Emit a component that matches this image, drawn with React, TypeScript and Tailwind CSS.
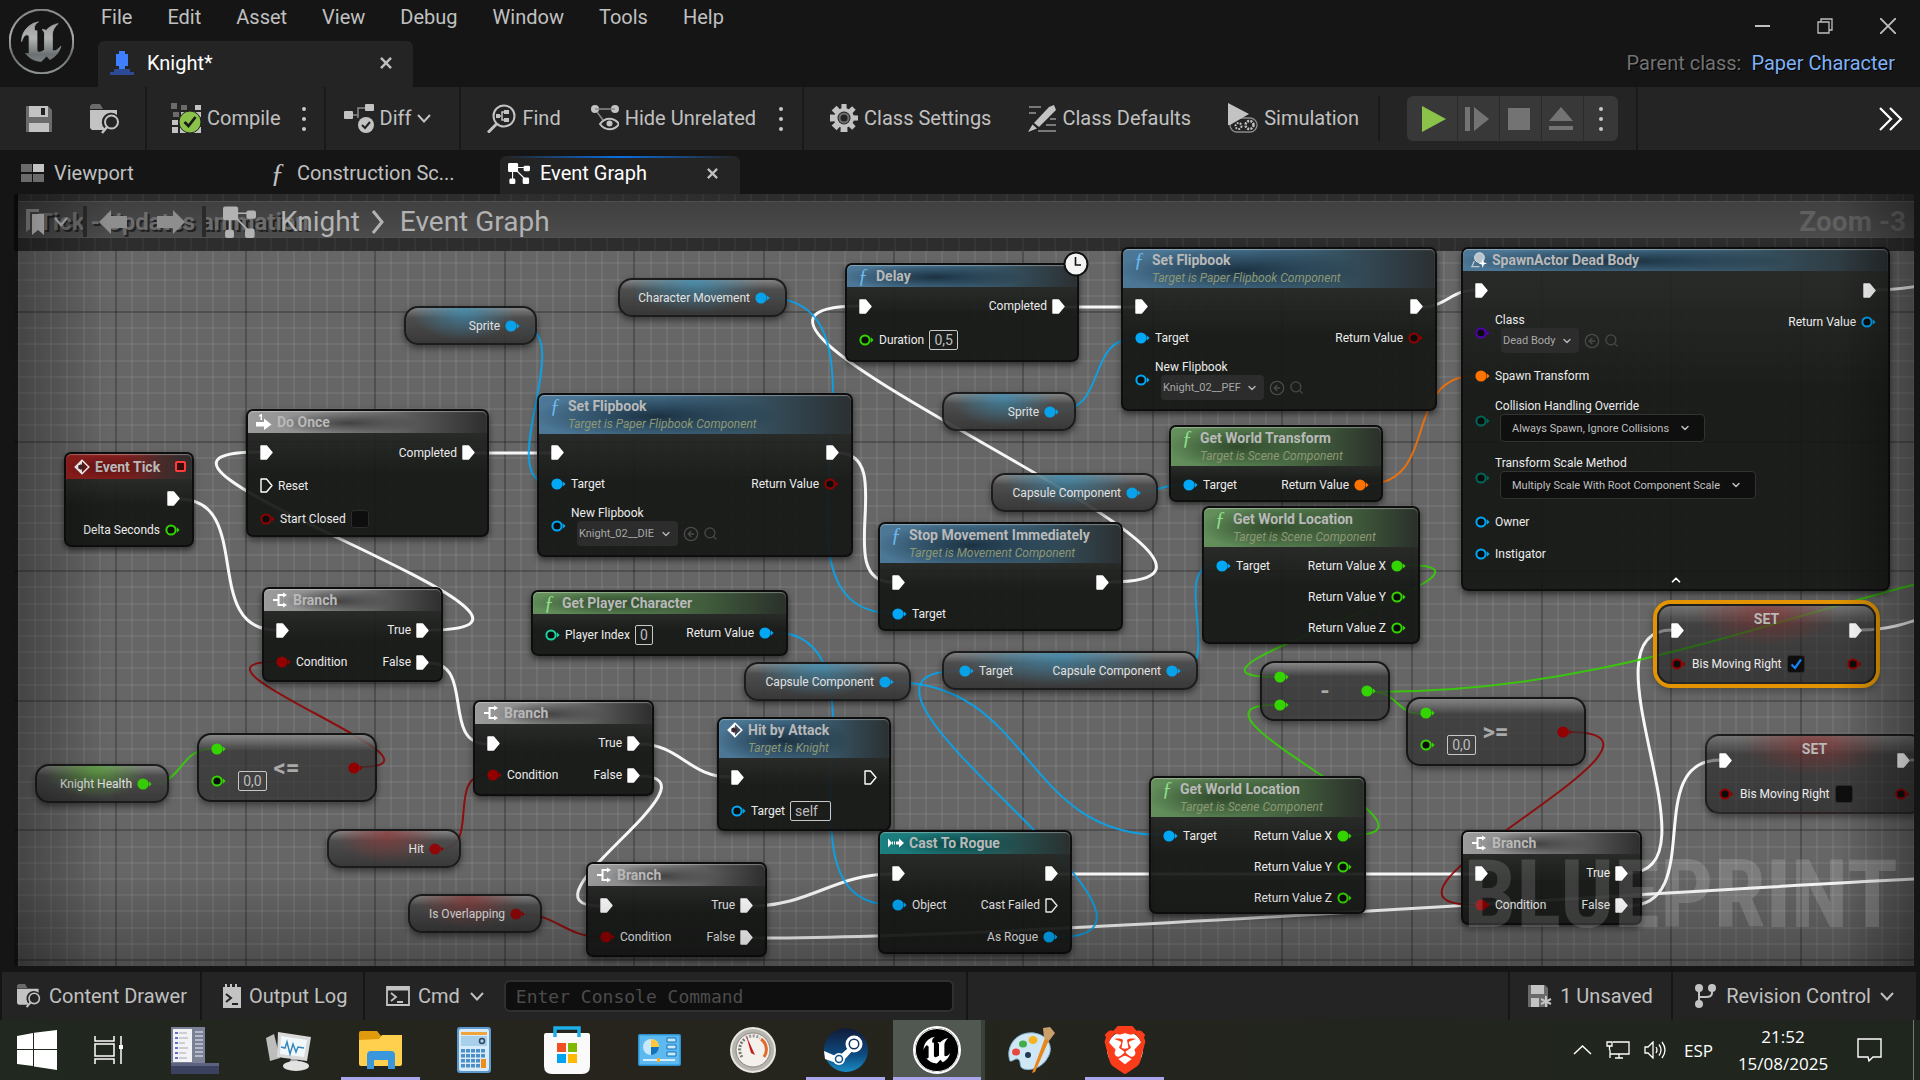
import React from "react";
import { ChevronDown, ChevronUp, Search, CircleArrowLeft } from "lucide-react";
import { SiBrave, SiUnrealengine } from "react-icons/si";

/* ------------------------------------------------------------------ */
/* Graph model                                                          */
/* ------------------------------------------------------------------ */

const BLUE = "#00a8f6";
const GREEN = "#34d400";
const RED = "#930000";
const ORANGE = "#ff7300";
const PURPLE = "#5200b4";
const TEAL = "#00665a";
const MINT = "#1fd3a0";
const WHITE = "#ffffff";

type Pin = {
  exec?: boolean;
  color?: string;
  linked?: boolean;
  label?: string;
  box?: string;
  wide?: boolean;
  check?: boolean;
  picker?: string;
  combo?: string;
};

type HeaderTone = "blue" | "green" | "gray" | "red" | "teal";
type IconName = "fn" | "branch" | "event" | "once" | "cast" | "spawn";

type GraphNode = {
  x: number;
  y: number;
  w: number;
  h: number;
  title: string;
  sub?: string;
  tone: HeaderTone;
  icon: IconName;
  row?: "tight" | "normal" | "loose";
  left: Pin[];
  right: Pin[];
  clock?: boolean;
  badge?: boolean;
  caret?: boolean;
};

const execIn: Pin = { exec: true, linked: true };
const on = (label: string, color: string): Pin => ({ label, color, linked: true });
const off = (label: string, color: string): Pin => ({ label, color });
const execs = (label: string): Pin => ({ exec: true, linked: true, label });

const nodes: GraphNode[] = [
  { x: 64, y: 452, w: 130, h: 95, title: "Event Tick", tone: "red", icon: "event", badge: true, left: [], right: [execIn, off("Delta Seconds", GREEN)] },
  { x: 246, y: 409, w: 243, h: 128, title: "Do Once", tone: "gray", icon: "once", row: "loose", left: [execIn, { exec: true, label: "Reset" }, { color: RED, label: "Start Closed", check: false }], right: [execs("Completed")] },
  { x: 537, y: 393, w: 316, h: 164, title: "Set Flipbook", sub: "Target is Paper Flipbook Component", tone: "blue", icon: "fn", row: "tight", left: [execIn, on("Target", BLUE), { color: BLUE, label: "New Flipbook", picker: "Knight_02__DIE" }], right: [execIn, off("Return Value", RED)] },
  { x: 845, y: 263, w: 234, h: 99, title: "Delay", tone: "blue", icon: "fn", clock: true, left: [execIn, { color: GREEN, label: "Duration", box: "0,5" }], right: [execs("Completed")] },
  { x: 1121, y: 247, w: 316, h: 164, title: "Set Flipbook", sub: "Target is Paper Flipbook Component", tone: "blue", icon: "fn", row: "tight", left: [execIn, on("Target", BLUE), { color: BLUE, label: "New Flipbook", picker: "Knight_02__PEF" }], right: [execIn, off("Return Value", RED)] },
  { x: 1461, y: 247, w: 429, h: 344, title: "SpawnActor Dead Body", tone: "blue", icon: "spawn", caret: true, left: [execIn, { color: PURPLE, label: "Class", picker: "Dead Body" }, on("Spawn Transform", ORANGE), { color: TEAL, label: "Collision Handling Override", combo: "Always Spawn, Ignore Collisions" }, { color: TEAL, label: "Transform Scale Method", combo: "Multiply Scale With Root Component Scale" }, off("Owner", BLUE), off("Instigator", BLUE)], right: [execIn, off("Return Value", BLUE)] },
  { x: 878, y: 522, w: 245, h: 109, title: "Stop Movement Immediately", sub: "Target is Movement Component", tone: "blue", icon: "fn", left: [execIn, on("Target", BLUE)], right: [execIn] },
  { x: 1169, y: 425, w: 214, h: 77, title: "Get World Transform", sub: "Target is Scene Component", tone: "green", icon: "fn", row: "tight", left: [on("Target", BLUE)], right: [on("Return Value", ORANGE)] },
  { x: 1202, y: 506, w: 218, h: 138, title: "Get World Location", sub: "Target is Scene Component", tone: "green", icon: "fn", row: "tight", left: [on("Target", BLUE)], right: [on("Return Value X", GREEN), off("Return Value Y", GREEN), off("Return Value Z", GREEN)] },
  { x: 531, y: 590, w: 257, h: 66, title: "Get Player Character", tone: "green", icon: "fn", row: "tight", left: [{ color: MINT, label: "Player Index", box: "0" }], right: [on("Return Value", BLUE)] },
  { x: 262, y: 587, w: 181, h: 95, title: "Branch", tone: "gray", icon: "branch", left: [execIn, on("Condition", RED)], right: [execs("True"), execs("False")] },
  { x: 473, y: 700, w: 181, h: 96, title: "Branch", tone: "gray", icon: "branch", left: [execIn, on("Condition", RED)], right: [execs("True"), execs("False")] },
  { x: 586, y: 862, w: 181, h: 95, title: "Branch", tone: "gray", icon: "branch", left: [execIn, on("Condition", RED)], right: [execs("True"), execs("False")] },
  { x: 1461, y: 830, w: 181, h: 95, title: "Branch", tone: "gray", icon: "branch", left: [execIn, on("Condition", RED)], right: [execs("True"), execs("False")] },
  { x: 717, y: 717, w: 174, h: 114, title: "Hit by Attack", sub: "Target is Knight", tone: "blue", icon: "event", left: [execIn, { color: BLUE, label: "Target", box: "self", wide: true }], right: [{ exec: true }] },
  { x: 878, y: 830, w: 194, h: 124, title: "Cast To Rogue", tone: "teal", icon: "cast", left: [execIn, on("Object", BLUE)], right: [execIn, { exec: true, label: "Cast Failed" }, on("As Rogue", BLUE)] },
  { x: 1149, y: 776, w: 217, h: 138, title: "Get World Location", sub: "Target is Scene Component", tone: "green", icon: "fn", row: "tight", left: [on("Target", BLUE)], right: [on("Return Value X", GREEN), off("Return Value Y", GREEN), off("Return Value Z", GREEN)] },
];

type Tint = "blue" | "green" | "red" | "none";
const variables: { x: number; y: number; w: number; label: string; target?: string; color: string; tint: Tint }[] = [
  { x: 404, y: 306, w: 133, label: "Sprite", color: BLUE, tint: "blue" },
  { x: 618, y: 278, w: 169, label: "Character Movement", color: BLUE, tint: "blue" },
  { x: 942, y: 392, w: 134, label: "Sprite", color: BLUE, tint: "blue" },
  { x: 991, y: 473, w: 167, label: "Capsule Component", color: BLUE, tint: "blue" },
  { x: 744, y: 662, w: 167, label: "Capsule Component", color: BLUE, tint: "blue" },
  { x: 942, y: 651, w: 256, label: "Capsule Component", target: "Target", color: BLUE, tint: "blue" },
  { x: 35, y: 764, w: 134, label: "Knight Health", color: GREEN, tint: "green" },
  { x: 327, y: 829, w: 134, label: "Hit", color: RED, tint: "red" },
  { x: 408, y: 894, w: 134, label: "Is Overlapping", color: RED, tint: "red" },
];

const operators = [
  { x: 197, y: 733, w: 180, h: 69, sign: "<=", box: true, out: RED },
  { x: 1260, y: 661, w: 130, h: 60, sign: "-", box: false, out: GREEN },
  { x: 1406, y: 697, w: 180, h: 69, sign: ">=", box: true, out: RED },
];

type Wire = [number, number, number, number, string];
const wires: Wire[] = [
  [179, 499, 276, 630, WHITE],
  [429, 630, 260, 452, WHITE],
  [429, 663, 487, 744, WHITE],
  [475, 453, 552, 453, WHITE],
  [838, 453, 892, 582, WHITE],
  [1109, 582, 860, 306, WHITE],
  [1064, 307, 1136, 307, WHITE],
  [1422, 307, 1475, 290, WHITE],
  [1875, 290, 1990, 278, WHITE],
  [639, 744, 730, 777, WHITE],
  [639, 776, 600, 906, WHITE],
  [752, 906, 892, 874, WHITE],
  [752, 938, 2252, 868, WHITE],
  [1058, 874, 1476, 874, WHITE],
  [1628, 873, 1672, 630, WHITE],
  [1628, 906, 1720, 760, WHITE],
  [1861, 630, 1990, 604, WHITE],
  [1910, 760, 1990, 760, WHITE],
  [519, 326, 552, 484, BLUE],
  [768, 298, 892, 613, BLUE],
  [1057, 411, 1136, 338, BLUE],
  [1140, 492, 1183, 484, BLUE],
  [1178, 671, 1216, 565, BLUE],
  [772, 632, 892, 905, BLUE],
  [892, 682, 1162, 835, BLUE],
  [1058, 937, 958, 671, BLUE],
  [360, 767, 274, 662, RED],
  [441, 849, 486, 775, RED],
  [522, 914, 600, 937, RED],
  [1569, 732, 1476, 905, RED],
  [1368, 484, 1474, 376, ORANGE],
  [151, 784, 211, 749, GREEN],
  [1405, 565, 1275, 677, GREEN],
  [1352, 835, 1275, 705, GREEN],
  [1373, 692, 1421, 714, GREEN],
  [1373, 692, 2223, 542, GREEN],
];

/* Links leaving to the right get a soft spline, links that turn back a wide loop. */
function spline([x1, y1, x2, y2]: Wire) {
  const dx = Math.abs(x2 - x1);
  const dy = Math.abs(y2 - y1);
  const c =
    x2 >= x1
      ? (Math.min(dx, 1000) + Math.min(dy, 1000)) / 3
      : (2 * Math.min(dx, 200) + 1.5 * Math.min(dy, 200)) / 3;
  return `M${x1} ${y1}C${x1 + c} ${y1} ${x2 - c} ${y2} ${x2} ${y2}`;
}

/* ------------------------------------------------------------------ */
/* Pins and fields                                                      */
/* ------------------------------------------------------------------ */

function ExecPin({ linked }: { linked?: boolean }) {
  return (
    <svg width="13" height="15" viewBox="0 0 13 15" className="shrink-0">
      <path d="M1 1h5.5L12 7.5 6.500 14H1z" fill={linked ? "#fff" : "none"} stroke="#fff" strokeWidth="1.4" strokeLinejoin="round" />
    </svg>
  );
}

function DataPin({ color, linked }: { color: string; linked?: boolean }) {
  return (
    <svg width="15" height="12" viewBox="0 0 15 12" className="shrink-0">
      <circle cx="6" cy="6" r="4.600" fill={linked ? color : "#0b0d0c"} stroke={color} strokeWidth="2" />
      <path d="M11.800 3.200 14.600 6l-2.800 2.800z" fill={color} />
    </svg>
  );
}

const PinGlyph = ({ pin }: { pin: Pin }) =>
  pin.exec ? <ExecPin linked={pin.linked} /> : <DataPin color={pin.color ?? WHITE} linked={pin.linked} />;

function Tick({ checked, label }: { checked: boolean; label: string }) {
  return (
    <span className="relative flex size-[18px] shrink-0">
      <input type="checkbox" defaultChecked={checked} aria-label={label} className="peer size-[18px] appearance-none rounded-[3px] border border-[#2c2c2c] bg-[#0e0e0e]" />
      <svg viewBox="0 0 18 18" className="pointer-events-none absolute inset-0 hidden peer-checked:block">
        <path d="M4.500 9.500 8 13l6-8.500" fill="none" stroke="#1583f0" strokeWidth="2.200" />
      </svg>
    </span>
  );
}

function ValueBox({ value, label, wide }: { value: string; label: string; wide?: boolean }) {
  const width = wide ? "w-[41px] pl-1" : value.length > 1 ? "w-[29px] text-center" : "w-[18px] text-center";
  return (
    <input
      aria-label={label}
      defaultValue={value}
      className={`h-5 ${width} rounded-[2px] border border-[#c8c8c8] bg-transparent text-sm leading-none text-[#bdbdbd]`}
    />
  );
}

function DropDown({ value, label, solid }: { value: string; label: string; solid?: boolean }) {
  return (
    <span className="relative flex items-center">
      <select
        aria-label={label}
        className={
          solid
            ? "h-7 appearance-none rounded-[4px] border border-[#333] bg-[#0f0f0f] pr-[34px] pl-[11px] text-[11px] text-[#c0c0c0]"
            : "h-[25px] appearance-none rounded-[4px] bg-[#2b2c2b] pr-[23px] pl-0.5 text-[11px] text-[#a8a8a8]"
        }
      >
        <option>{value}</option>
      </select>
      <ChevronDown
        size={12}
        strokeWidth={3}
        className={solid ? "pointer-events-none absolute right-[14px] text-[#c0c0c0]" : "pointer-events-none absolute right-[6px] text-[#b0b0b0]"}
      />
    </span>
  );
}

const rowHeight = { tight: "h-[31px]", normal: "h-8", loose: "h-[33px]" };

function LeftPin({ pin, row }: { pin: Pin; row: keyof typeof rowHeight }) {
  if (pin.picker || pin.combo) {
    return (
      <div className="my-[7px] flex items-center gap-[5px]">
        <PinGlyph pin={pin} />
        <div className="flex flex-col">
          <span className="h-[15px] leading-[15px]">{pin.label}</span>
          <div className={pin.picker ? "flex items-center gap-1 pl-1.5 text-[#4a4a4a]" : "flex pl-[5px]"}>
            <DropDown value={(pin.picker ?? pin.combo) as string} label={pin.label as string} solid={!!pin.combo} />
            {pin.picker && <CircleArrowLeft size={16} className="ml-px" />}
            {pin.picker && <Search size={15} />}
          </div>
        </div>
      </div>
    );
  }
  return (
    <div className={`flex items-center gap-[5px] ${pin.box ? "h-[35px]" : rowHeight[row]}`}>
      <PinGlyph pin={pin} />
      {pin.label && <span>{pin.label}</span>}
      {pin.box && <ValueBox value={pin.box} label={pin.label as string} wide={pin.wide} />}
      {pin.check !== undefined && <Tick checked={pin.check} label={pin.label as string} />}
    </div>
  );
}

function RightPin({ pin, row }: { pin: Pin; row: keyof typeof rowHeight }) {
  return (
    <div className={`flex items-center justify-end gap-[5px] ${rowHeight[row]}`}>
      {pin.label && <span>{pin.label}</span>}
      <PinGlyph pin={pin} />
    </div>
  );
}

/* ------------------------------------------------------------------ */
/* Nodes                                                                */
/* ------------------------------------------------------------------ */

const headerTone: Record<HeaderTone, string> = {
  blue: "bg-[radial-gradient(ellipse_40%_60%_at_38%_55%,rgba(20,38,52,0.85),transparent),linear-gradient(90deg,#4c7796_0%,#45708c_40%,#35505f_70%,#2b3032_100%)]",
  green: "bg-[radial-gradient(ellipse_35%_55%_at_32%_50%,rgba(38,60,34,0.8),transparent),linear-gradient(90deg,#64905c_0%,#557c4f_40%,#3f5a3b_70%,#2a302a_100%)]",
  gray: "bg-[radial-gradient(ellipse_30%_55%_at_42%_55%,rgba(50,50,50,0.8),transparent),linear-gradient(90deg,#9c9c9c_0%,#868686_40%,#575757_70%,#2d2e2d_100%)]",
  red: "bg-[radial-gradient(ellipse_35%_55%_at_35%_55%,rgba(80,10,10,0.7),transparent),linear-gradient(90deg,#9b1f1f_0%,#84211f_45%,#4a2a2a_75%,#2c2d2c_100%)]",
  teal: "bg-[radial-gradient(ellipse_35%_55%_at_40%_55%,rgba(8,62,62,0.8),transparent),linear-gradient(90deg,#1b8080_0%,#1d7272_40%,#265050_70%,#2a302f_100%)]",
};

function NodeIcon({ icon, tone }: { icon: IconName; tone: HeaderTone }) {
  switch (icon) {
    case "fn":
      return <span className={`w-4 text-center font-['Liberation_Serif',serif] text-xl leading-4 italic ${tone === "green" ? "text-[#8fe08a]" : "text-[#6db9f0]"}`}>ƒ</span>;
    case "branch":
      return (
        <svg width="16" height="16" viewBox="0 0 16 16" fill="none" stroke="#fff" strokeWidth="2">
          <path d="M1 8h5M12 3H6.500v10H12" />
          <path d="M11 0.500 15 3l-4 2.500zM11 10.500 15 13l-4 2.500z" fill="#fff" stroke="none" />
        </svg>
      );
    case "event":
      return (
        <svg width="16" height="16" viewBox="0 0 16 16">
          <path d="M8 1.200 14.800 8 8 14.800 1.200 8z" fill="#4a1515" fillOpacity=".3" stroke="#fff" strokeWidth="1.500" />
          <path d="M8 1.200V6H4.500V10H8v4.800L1.200 8z" fill="#fff" />
          <path d="M7.500 4.500 4 8l3.500 3.500V9.500H10v-3H7.500z" fill="#40262a" />
        </svg>
      );
    case "once":
      return (
        <svg width="16" height="16" viewBox="0 0 16 16" fill="#fff">
          <path d="M0 8h8V4.500L15.500 10.500 8 16v-3.500H0z" />
          <path d="M3 1.500 5 0h1v6H4.500V2L3 2.800z" />
        </svg>
      );
    case "cast":
      return (
        <svg width="16" height="12" viewBox="0 0 16 12" fill="#fff">
          <path d="M0 1.500 4 6 0 10.500zM4 4.500h1V7.500H4zM6 4.500h1V7.500H6zM8 4.500h3V1.500L16 6l-5 4.500V7.500H8z" />
        </svg>
      );
    case "spawn":
      return (
        <svg width="16" height="16" viewBox="0 0 17 17">
          <circle cx="9" cy="6" r="5.200" fill="#b9c4cc" stroke="#dfe6ea" />
          <path d="M3.500 9.500 1 15.500h8" fill="none" stroke="#b9c4cc" strokeWidth="1.500" />
          <path d="M12.500 7.500 13.600 11 17 12.200 13.600 13.400 12.500 17 11.400 13.400 8 12.200 11.400 11z" fill="#fff" />
        </svg>
      );
  }
}

function BlueprintNode({ node }: { node: GraphNode }) {
  const row = node.row ?? "normal";
  return (
    <section
      className="absolute z-10 flex flex-col rounded-[7px] border-2 border-[#0d0e0d] bg-[#161816]/93 text-xs text-[#ececec] shadow-[0_3px_6px_rgba(0,0,0,0.55)]"
      style={{ left: node.x, top: node.y, width: node.w, height: node.h }}
    >
      <header className={`flex flex-col rounded-t-[5px] px-2 shadow-[inset_0_1px_1px_rgba(255,255,255,0.35)] ${headerTone[node.tone]}`}>
        <div className={node.badge ? "flex h-[25px] items-center gap-[5px]" : "flex h-[22px] items-center gap-[5px]"}>
          <NodeIcon icon={node.icon} tone={node.tone} />
          <h3 className="text-sm leading-none font-bold whitespace-nowrap text-[#b9b9b9]">{node.title}</h3>
          {node.badge && <span className="-mr-0.5 ml-auto size-[11px] rounded-[2px] border-2 border-[#ff3b3b] bg-[#3a0d0d]" />}
        </div>
        {node.sub && <p className="h-[17px] pl-[21px] text-xs leading-[14px] whitespace-nowrap text-[#8d9875] italic">{node.sub}</p>}
      </header>
      <div className="flex flex-1 justify-between rounded-b-[5px] bg-linear-to-b from-white/6 to-transparent to-40% px-3 pt-[3px] leading-none whitespace-nowrap">
        <div className="flex flex-col">{node.left.map((p, i) => <LeftPin key={i} pin={p} row={row} />)}</div>
        <div className="flex flex-col">{node.right.map((p, i) => <RightPin key={i} pin={p} row={row} />)}</div>
      </div>
      {node.caret && <ChevronUp size={14} strokeWidth={3} className="mb-0.5 self-center text-white" />}
      {node.clock && (
        <svg width="26" height="26" viewBox="0 0 26 26" className="absolute -top-[14px] -right-[12px]">
          <circle cx="13" cy="13" r="11.500" fill="#f4f4f4" stroke="#111" strokeWidth="2" />
          <path d="M12.500 6v8H18" fill="none" stroke="#111" strokeWidth="1.600" />
        </svg>
      )}
    </section>
  );
}

const tintClass: Record<Tint, string> = {
  blue: "bg-[radial-gradient(ellipse_40%_85%_at_45%_8%,rgba(55,150,195,0.7),transparent),linear-gradient(180deg,#858585_0%,#4b4b4b_28%,#353535_100%)]",
  green: "bg-[radial-gradient(ellipse_40%_85%_at_45%_8%,rgba(90,180,50,0.7),transparent),linear-gradient(180deg,#858585_0%,#4b4b4b_28%,#353535_100%)]",
  red: "bg-[radial-gradient(ellipse_40%_85%_at_45%_8%,rgba(150,50,50,0.7),transparent),linear-gradient(180deg,#858585_0%,#4b4b4b_28%,#353535_100%)]",
  none: "bg-[linear-gradient(180deg,rgba(140,140,140,0.85)_0%,rgba(50,50,50,0.7)_24%,rgba(46,46,46,0.7)_100%)]",
};

function VariableNode({ v }: { v: (typeof variables)[number] }) {
  return (
    <section
      className={`absolute z-10 flex h-[39px] items-center rounded-[14px] border-2 border-[#161616] px-[15px] text-xs leading-none whitespace-nowrap text-[#ececec] opacity-92 shadow-[0_3px_6px_rgba(0,0,0,0.5)] ${tintClass[v.tint]}`}
      style={{ left: v.x, top: v.y, width: v.w }}
    >
      {v.target && <span className="flex items-center gap-[5px]"><DataPin color={v.color} linked />{v.target}</span>}
      <span className="ml-auto flex items-center gap-[5px]">{v.label}<DataPin color={v.color} linked /></span>
    </section>
  );
}

function OperatorNode({ op }: { op: (typeof operators)[number] }) {
  return (
    <section
      className={`absolute z-10 flex items-center justify-between rounded-[14px] border-2 border-[#161616] px-3 shadow-[0_3px_6px_rgba(0,0,0,0.4)] ${tintClass.none}`}
      style={{ left: op.x, top: op.y, width: op.w, height: op.h }}
    >
      <div className={op.box ? "flex h-full flex-col justify-between pt-2 pb-[13px]" : "flex h-full flex-col justify-between py-2"}>
        <DataPin color={GREEN} linked />
        <span className="flex h-3 items-center gap-3">
          <DataPin color={GREEN} linked={!op.box} />
          {op.box && <ValueBox value="0,0" label="Second operand" />}
        </span>
      </div>
      <strong className={op.box ? "-ml-[42px] text-2xl text-[#a9a9a9]" : "text-2xl text-[#a9a9a9]"}>{op.sign}</strong>
      <DataPin color={op.out} linked />
    </section>
  );
}

function SetNode({ x, y, checked, selected }: { x: number; y: number; checked: boolean; selected?: boolean }) {
  return (
    <section
      className={`absolute z-10 flex h-[80px] w-[219px] flex-col rounded-[14px] border-2 border-[#161616]/80 bg-[radial-gradient(ellipse_34%_45%_at_50%_8%,rgba(150,40,40,0.55),transparent),linear-gradient(180deg,rgba(120,120,120,0.7)_0%,rgba(30,30,30,0.52)_24%,rgba(20,20,20,0.55)_100%)] px-3 text-xs leading-none text-[#ececec] ${selected ? "shadow-[0_0_0_4px_#e39400,0_3px_8px_4px_rgba(0,0,0,0.3)]" : "shadow-[0_3px_6px_rgba(0,0,0,0.4)]"}`}
      style={{ left: x, top: y }}
    >
      <h3 className="pt-1.5 text-center text-sm leading-none font-bold text-[#b9b9b9]">SET</h3>
      <div className="-mt-1 flex h-4 items-center justify-between"><ExecPin linked /><ExecPin linked /></div>
      <div className="mt-[17px] flex items-center justify-between whitespace-nowrap">
        <span className="flex items-center gap-1.5">
          <DataPin color={RED} />Bis Moving Right<Tick checked={checked} label="Bis Moving Right" />
        </span>
        <DataPin color={RED} />
      </div>
    </section>
  );
}

function Grid() {
  const step = 16.2;
  const cols = Array.from({ length: 120 }, (_, i) => i - 7);
  const rows = Array.from({ length: 60 }, (_, i) => i - 8);
  return (
    <g>
      {cols.map((i) => i % 8 !== 0 && <rect key={`c${i}`} x={Math.round(116 + i * step) - 1} y={190} width={2} height={900} fill="#fff" fillOpacity=".065" />)}
      {rows.map((i) => i % 8 !== 0 && <rect key={`r${i}`} x={0} y={Math.round(312 + i * step) - 1} width={2000} height={2} fill="#fff" fillOpacity=".065" />)}
      {cols.map((i) => i % 8 === 0 && <rect key={`C${i}`} x={Math.round(116 + i * step) - 1} y={190} width={2} height={900} fill="#000" fillOpacity=".22" />)}
      {rows.map((i) => i % 8 === 0 && <rect key={`R${i}`} x={0} y={Math.round(312 + i * step) - 1} width={2000} height={2} fill="#000" fillOpacity=".22" />)}
    </g>
  );
}

function Graph() {
  const pan = { left: -14, top: -194 };
  return (
    <main className="relative isolate mr-1.5 ml-3.5 min-h-[772px] flex-1 overflow-hidden bg-[#666]">
      <div className="absolute" style={pan}>
        <svg width="1920" height="1080" className="absolute top-0 left-0 max-w-none">
          <Grid />
          {wires.map((w, i) => (
            <path key={i} d={spline(w)} fill="none" stroke={w[4]} strokeWidth={w[4] === WHITE ? 3 : 2} strokeOpacity={w[4] === WHITE ? 0.95 : 0.85} />
          ))}
        </svg>
        {nodes.map((n, i) => <BlueprintNode key={i} node={n} />)}
        {variables.map((v, i) => <VariableNode key={i} v={v} />)}
        {operators.map((o, i) => <OperatorNode key={i} op={o} />)}
        <SetNode x={1657} y={604} checked selected />
        <SetNode x={1705} y={734} checked={false} />
      </div>
      <div className="pointer-events-none absolute inset-0 z-20 bg-[linear-gradient(90deg,rgba(0,0,0,0.35)_0%,transparent_5%,transparent_96%,rgba(0,0,0,0.35)_100%),linear-gradient(0deg,rgba(0,0,0,0.25)_0%,transparent_12%)]" />
      <div className="pointer-events-none absolute inset-y-0 left-0 z-20 w-1 bg-black/70" />
      <p className="pointer-events-none absolute right-[16px] bottom-[24px] z-20 font-['Roboto_Condensed','Liberation_Sans_Narrow',Roboto,sans-serif] text-[94px] leading-none font-bold text-white/15">BLUEPRINT</p>

      <nav className="absolute inset-x-0 top-0 flex h-[57px] flex-col bg-[#2d2d2d] bg-[linear-gradient(90deg,rgba(255,255,255,0.04)_2px,transparent_2px)] bg-size-[16px_16px] pt-[7px] pl-1" aria-label="Graph path">
        <div className="relative flex h-[37px] items-center border-y border-[#505050] bg-linear-to-b from-[#404040] to-[#4b4b4b] pt-1 text-[28px] leading-none text-[#b2b2b2]">
          <span className="absolute top-[8px] left-5 text-2xl leading-none font-bold whitespace-nowrap text-[#6c6c6c] [text-shadow:2px_2px_0_#222]">Tick - Updates animation</span>
          <button className="relative flex h-full w-[69px] items-center gap-2.5 border-r-4 border-[#2a2a2a] pl-2" aria-label="Bookmarks">
            <svg width="18" height="26" viewBox="0 0 18 26"><path d="M0 0h13v3H4v17l-4 3z" fill="#8a8a8a" /><path d="M6 5h12v21l-6-5-6 5z" fill="#c4c4c4" /></svg>
            <svg width="14" height="10" viewBox="0 0 14 10" fill="none" stroke="currentColor" strokeWidth="2.200"><path d="m1 1 6 7 6-7" /></svg>
          </button>
          <span className="relative flex h-full w-[119px] items-center gap-[30px] border-r-4 border-[#2a2a2a] pl-3">
            <button aria-label="Back"><svg width="28" height="24" viewBox="0 0 28 24"><path d="M0 12 12 0v6h16v12H12v6z" fill="#8e8e8e" /></svg></button>
            <button aria-label="Forward"><svg width="28" height="24" viewBox="0 0 28 24"><path d="M28 12 16 0v6H0v12h16v6z" fill="#8e8e8e" /></svg></button>
          </span>
          <span className="relative ml-[17px] flex"><GraphIcon size={33} /></span>
          <span className="relative ml-6">Knight</span>
          <svg width="14" height="24" viewBox="0 0 14 24" fill="none" stroke="currentColor" strokeWidth="3" className="relative mx-[11px]"><path d="m2 1 9 11-9 11" /></svg>
          <span className="relative ml-1">Event Graph</span>
          <span className="relative mr-2 ml-auto font-bold text-[#606060]">Zoom -3</span>
        </div>
      </nav>
    </main>
  );
}

/* ------------------------------------------------------------------ */
/* Window chrome                                                        */
/* ------------------------------------------------------------------ */

function GraphIcon({ size }: { size: number }) {
  return (
    <svg width={size} height={size} viewBox="0 0 24 24" fill="currentColor">
      <rect x="0" y="1" width="11" height="10" rx="1.500" />
      <rect x="17" y="4" width="7" height="6" rx="1.500" />
      <rect x="1.500" y="18" width="6.500" height="6" rx="1.500" />
      <rect x="16" y="17" width="7" height="7" rx="1.500" />
      <path d="M10 6h8M5 10v9M9 9l9 9" stroke="currentColor" strokeWidth="1.200" />
    </svg>
  );
}

/* Down arrow used by every menu button of the window chrome. */
const Caret = ({ className }: { className?: string }) => (
  <svg width="14" height="9" viewBox="0 0 14 9" fill="none" stroke="currentColor" strokeWidth="2" className={className}><path d="m1 1 6 6.500L13 1" /></svg>
);

const Dots = ({ label }: { label: string }) => (
  <button aria-label={label} className="flex flex-col gap-[6px]">
    <i className="size-1 rounded-full bg-[#c8c8c8]" /><i className="size-1 rounded-full bg-[#c8c8c8]" /><i className="size-1 rounded-full bg-[#c8c8c8]" />
  </button>
);

const Cross = ({ size }: { size: number }) => (
  <svg width={size} height={size} viewBox="0 0 10 10" stroke="currentColor" strokeWidth="2"><path d="M.8.8 9.200 9.200M9.200.8.8 9.200" /></svg>
);

const SaveIcon = () => (
  <svg width="26" height="28" viewBox="0 0 26 28">
    <path d="M0 1h22l4 4v22H0z" fill="#6b6b6b" /><path d="M3 1h19v11H3z" fill="#c3c3c3" /><path d="M15 3h4v7h-4z" fill="#222" /><path d="M3 18h20v9H3z" fill="#c3c3c3" />
  </svg>
);

const BrowseIcon = ({ size }: { size: number }) => (
  <svg width={size} height={size} viewBox="0 0 30 30">
    <path d="M0 5V2l2-2h8l3 5z" fill="#6b6b6b" />
    <path d="M0 6h27v5a9 9 0 0 0-12 14l-1 1H2l-2-2z" fill="#c3c3c3" />
    <circle cx="21.500" cy="18" r="6.500" fill="none" stroke="#c3c3c3" strokeWidth="2" /><path d="m17 23-5 6" stroke="#c3c3c3" strokeWidth="2.500" />
  </svg>
);

const CompileIcon = () => (
  <svg width="30" height="30" viewBox="0 0 30 30">
    <g fill="#6b6b6b"><path d="M0 0h6v6H0zM10 2h6v5h-6zM2 9h6v5H2z" /></g>
    <g fill="#c3c3c3"><path d="M24 2h6v5h-6zM10 9h6v5h-6zM24 9h6v5h-6zM1 17h6v5H1zM1 24h6v6H1zM9 24h6v6H9zM16 24h14v6H16z" /></g>
    <circle cx="19" cy="19" r="11" fill="#8bc34a" stroke="#222" /><path d="m13.500 19 4 4 7-9" fill="none" stroke="#1a1a1a" strokeWidth="2.800" />
  </svg>
);

const DiffIcon = () => (
  <svg width="30" height="30" viewBox="0 0 30 30" fill="#c3c3c3">
    <rect x="0" y="8" width="9" height="8" rx="1" /><rect x="21" y="1" width="9" height="7" rx="1" />
    <path d="M9 12h5V5h7M14 12v3" fill="none" stroke="#8a8a8a" strokeWidth="1.500" />
    <circle cx="22" cy="22" r="8" /><path d="m18 22 3 3 5-6" fill="none" stroke="#222" strokeWidth="2" />
  </svg>
);

const FindIcon = () => (
  <svg width="29" height="29" viewBox="0 0 29 29" fill="none" stroke="#c3c3c3">
    <circle cx="17" cy="12" r="10.500" strokeWidth="2" /><path d="M9.500 20 1 28.500" strokeWidth="3" />
    <path d="M10 12h4M18 8h-3v8h3" strokeWidth="1.500" /><path d="M9 10h4v4H9zM17 6h5v4h-5zM17 14h5v4h-5z" fill="#c3c3c3" stroke="none" />
  </svg>
);

const HideIcon = () => (
  <svg width="28" height="28" viewBox="0 0 28 28" fill="#c3c3c3">
    <circle cx="4" cy="5" r="4" /><circle cx="24" cy="5" r="4" /><path d="M4 5h20M6 8l6 8" stroke="#8a8a8a" strokeWidth="1.500" />
    <path d="M9 20c5-7 14-7 19 0-5 7-14 7-19 0z" fill="#242424" stroke="#c3c3c3" strokeWidth="2" /><circle cx="18.500" cy="19.500" r="3" />
  </svg>
);

const GearIcon = () => (
  <svg width="28" height="28" viewBox="0 0 28 28">
    {[0, 45, 90, 135].map((a) => <path key={a} d="M11.500 0h5l1 28h-7z" fill="#c3c3c3" transform={`rotate(${a} 14 14)`} />)}
    <circle cx="14" cy="14" r="10" fill="#c3c3c3" /><circle cx="14" cy="14" r="6.500" fill="#242424" /><circle cx="14" cy="14" r="4.500" fill="none" stroke="#6f6f6f" strokeWidth="2" />
  </svg>
);

const DefaultsIcon = () => (
  <svg width="28" height="28" viewBox="0 0 28 28">
    <path d="M1 3h12M1 9h7M22 15h6M18 21h10M10 27h18" stroke="#7a7a7a" strokeWidth="1.800" />
    <path d="m21 3 5-2 2 5L11 23l-5-4zM4.500 20.500 9 24.500 0 28z" fill="#c3c3c3" />
  </svg>
);

const SimIcon = () => (
  <svg width="30" height="30" viewBox="0 0 30 30">
    <rect x="2" y="15" width="27" height="14" rx="7" fill="#242424" stroke="#8a8a8a" strokeWidth="1.300" />
    <path d="m0 0 21 11L2 22H0z" fill="#c3c3c3" />
    <circle cx="21.500" cy="22" r="4" fill="none" stroke="#c3c3c3" strokeWidth="2.500" strokeDasharray="2 1.200" />
    <circle cx="10.500" cy="23" r="3" fill="none" stroke="#c3c3c3" strokeWidth="2" strokeDasharray="1.800 1.200" />
  </svg>
);

function TitleBar() {
  return (
    <header className="flex h-[87px] bg-[#151515]">
      <div className="w-[83px] pt-[9px] pl-[9px]">
        <svg width="0" height="0" className="absolute">
          <linearGradient id="steel" x1="0" y1="0" x2="0" y2="1">
            <stop offset="0" stopColor="#8a8a8a" /><stop offset=".45" stopColor="#b2b4b4" /><stop offset=".7" stopColor="#6b7172" /><stop offset="1" stopColor="#959b9b" />
          </linearGradient>
        </svg>
        <SiUnrealengine size={65} fill="url(#steel)" stroke="url(#steel)" strokeWidth={0.3} title="Unreal Editor" />
      </div>
      <div className="flex flex-1 flex-col justify-between">
        <nav className="flex h-[34px] items-center text-xl leading-none text-[#c0c0c0]" aria-label="Main menu">
          {["File", "Edit", "Asset", "View", "Debug", "Window", "Tools", "Help"].map((m) => <button key={m} className="pr-[17px] pl-[18px]">{m}</button>)}
        </nav>
        <div className="ml-[15px] flex h-[46px] w-[315px] items-center rounded-t-md bg-[#242424] pr-[21px] pb-0.5 pl-3 text-xl leading-none text-white">
          <svg width="24" height="24" viewBox="0 0 24 24"><path d="M9 0h6v3h3v12h-3v3H9v-3H6V3h3z" fill="#3f7fff" /><path d="M4 18h16v3h4v3H0v-3h4z" fill="#2b4c94" /></svg>
          <span className="ml-[13px]">Knight*</span>
          <button className="ml-auto text-[#c0c0c0]" aria-label="Close Knight"><Cross size={12} /></button>
        </div>
      </div>
      <div className="flex flex-col items-end gap-4 pt-[17px] pr-6 text-[#c0c0c0]">
        <div className="flex items-center gap-[47px] pt-px">
          <button aria-label="Minimize" className="flex h-4 items-center"><i className="h-0.5 w-[15px] bg-[#c0c0c0]" /></button>
          <button aria-label="Restore"><svg width="16" height="16" viewBox="0 0 16 16" fill="none" stroke="currentColor" strokeWidth="1.300"><path d="M1 4h11v11H1zM4 4V1h11v11h-3" /></svg></button>
          <button aria-label="Close"><svg width="16" height="16" viewBox="0 0 16 16" stroke="currentColor" strokeWidth="1.800"><path d="m0 0 16 16M16 0 0 16" /></svg></button>
        </div>
        <p className="flex gap-2.5 pr-px text-xl leading-[26px] text-[#737373] [text-shadow:1px_1px_0_#000]">Parent class: <a href="#paper-character" className="text-[#7fb1f5]">Paper Character</a></p>
      </div>
    </header>
  );
}

const barButton = "flex items-center gap-1.5 whitespace-nowrap pb-px";

function Toolbar() {
  return (
    <div className="flex h-[63px] items-stretch bg-[#242424] text-xl leading-none text-[#c0c0c0]">
      <div className="flex w-[147px] items-center gap-[38px] border-r-2 border-[#191919] pl-[26px]">
        <button aria-label="Save"><SaveIcon /></button>
        <button aria-label="Browse"><BrowseIcon size={30} /></button>
      </div>
      <div className="flex items-center gap-[21px] border-r-2 border-[#191919] pr-[18px] pl-6">
        <button className={barButton}><CompileIcon />Compile</button>
        <Dots label="Compile options" />
      </div>
      <div className="flex items-center border-r-2 border-[#191919] pr-7 pl-[18px]">
        <button className={barButton}><DiffIcon />Diff<Caret /></button>
      </div>
      <div className="flex items-center border-r-2 border-[#191919] pr-[19px] pl-[26px]">
        <button className={barButton}><FindIcon />Find</button>
        <button className={`${barButton} mr-[23px] ml-[30px]`}><HideIcon />Hide Unrelated</button>
        <Dots label="Hide options" />
      </div>
      <div className="flex items-center gap-[37px] pl-[26px]">
        <button className={barButton}><GearIcon />Class Settings</button>
        <button className={barButton}><DefaultsIcon />Class Defaults</button>
        <button className={barButton}><SimIcon />Simulation</button>
      </div>
      <div className="my-[9px] ml-[19px] w-0.5 bg-[#191919]" />
      <div className="my-[9px] ml-[27px] flex divide-x divide-[#2a2a2a] overflow-hidden rounded-md bg-[#383838] text-[#737373]">
        <button aria-label="Play" className="flex w-[51px] items-center justify-center pl-1"><svg width="24" height="26"><path d="M0 0v26l24-13z" fill="#8bc34a" /></svg></button>
        <button aria-label="Step" className="flex w-[42px] items-center justify-center pr-1"><svg width="24" height="24" fill="currentColor"><path d="M0 0h5v24H0zM9 0l15 12L9 24z" /></svg></button>
        <button aria-label="Stop" className="flex w-[42px] items-center justify-center pr-1"><i className="size-[22px] bg-[#737373]" /></button>
        <button aria-label="Eject" className="flex w-[42px] items-center justify-center pr-1"><svg width="24" height="24" fill="currentColor"><path d="M12 0l12 14H0zM0 19h24v4H0z" /></svg></button>
        <span className="flex w-[34px] items-center justify-center"><Dots label="Play options" /></span>
      </div>
      <div className="ml-[18px] w-0.5 bg-[#191919]" />
      <button aria-label="More" className="mr-[17px] ml-auto text-white"><svg width="24" height="24" viewBox="0 0 24 24" fill="none" stroke="currentColor" strokeWidth="2.200"><path d="m1 1 11 11L1 23M11 1l11 11-11 11" /></svg></button>
    </div>
  );
}

function TabStrip() {
  return (
    <div className="flex h-11 items-end bg-[#151515] text-xl leading-none text-[#c0c0c0]" role="tablist">
      <button role="tab" className="flex h-[38px] w-[249px] items-center gap-2.5 pb-1 pl-[21px]">
        <svg width="23" height="18" viewBox="0 0 23 18"><path d="M0 0h11v8H0zM0 10h11v8H0zM12 10h11v8H12z" fill="#6b6b6b" /><path d="M12 0h11v8H12z" fill="#c3c3c3" /></svg>
        Viewport
      </button>
      <button role="tab" className="flex h-[38px] w-[251px] items-center gap-3 pb-1 pl-[21px]">
        <span className="w-[15px] font-['Liberation_Serif',serif] text-[28px] leading-none italic">ƒ</span>
        Construction Sc...
      </button>
      <div role="tab" aria-selected="true" className="relative flex h-[38px] w-60 items-center gap-2.5 rounded-t-md bg-[#242424] pb-1 pl-2 text-white">
        <i className="absolute inset-x-1 top-0 h-0.5 bg-linear-to-r from-transparent via-[#0a6fe0] to-transparent" />
        <GraphIcon size={22} />
        Event Graph
        <button aria-label="Close Event Graph" className="mr-[22px] ml-auto text-[#c0c0c0]"><Cross size={11} /></button>
      </div>
    </div>
  );
}

function StatusBar() {
  const cell = "flex items-center gap-2 border-r-2 border-[#161616]";
  return (
    <footer className="mt-1.5 mr-1 ml-0.5 flex h-12 bg-[#242424] text-xl leading-none whitespace-nowrap text-[#c0c0c0]">
      <button className={`${cell} w-[200px] gap-1.5 pl-[15px]`}><BrowseIcon size={24} />Content Drawer</button>
      <button className={`${cell} w-[163px] pl-[21px]`}>
        <svg width="18" height="24" viewBox="0 0 18 24"><path d="M0 3h2V0h2v3h3V0h2v3h3V0h2v3h4v21H0z" fill="#c3c3c3" /><path d="m3 10 5 4-5 4M9 20h6" fill="none" stroke="#222" strokeWidth="2" /></svg>
        Output Log
      </button>
      <div className={`${cell} w-[603px] gap-1.5 pl-[21px]`}>
        <svg width="24" height="20" viewBox="0 0 24 20" fill="none" stroke="#c3c3c3" strokeWidth="1.800"><path d="M1 1h22v18H1z" /><path d="M1 3h22" strokeWidth="3" /><path d="m5 7 5 4-5 4M11 16h6" /></svg>
        Cmd
        <Caret className="ml-0.5" />
        <input aria-label="Console command" placeholder="Enter Console Command" className="ml-3 h-8 w-[450px] rounded-md border-2 border-[#303030] bg-[#0f0f0f] pl-2.5 font-['DejaVu_Sans_Mono',monospace] text-lg placeholder:text-[#4c4c4c]" />
      </div>
      <div className="flex-1 border-r-2 border-[#161616]" />
      <button className={`${cell} w-[163px] pl-[18px]`}>
        <svg width="24" height="24" viewBox="0 0 24 24"><path d="M0 1h17l3 3v19H0z" fill="#6b6b6b" /><path d="M3 1h13v9H3zM3 14h8v9H3z" fill="#c3c3c3" /><path d="M18 12v11M13 15l10 5M23 15l-10 5" stroke="#c3c3c3" strokeWidth="2" /></svg>
        1 Unsaved
      </button>
      <button className="flex items-center gap-[9px] pr-[22px] pl-[22px]">
        <svg width="22" height="24" viewBox="0 0 22 24" fill="#c3c3c3"><circle cx="4" cy="4" r="4" /><circle cx="17" cy="4" r="4" /><circle cx="4" cy="20" r="4" /><path d="M4 4v16M17 5v4q0 4-6 4H4" fill="none" stroke="#c3c3c3" strokeWidth="2" /></svg>
        Revision Control
        <Caret />
      </button>
    </footer>
  );
}

/* ------------------------------------------------------------------ */
/* Desktop task bar                                                     */
/* ------------------------------------------------------------------ */

const apps: { name: string; state?: "open" | "active"; icon: React.ReactNode }[] = [
  { name: "Server", icon: <svg width="48" height="48" viewBox="0 0 48 48"><path d="M0 1h34v37H0z" fill="#7b8296" /><path d="M2 3h19v33H2z" fill="#f2f3f7" /><path d="M4 7h3M4 12h3M4 17h3M4 22h3M4 27h3M4 32h3" stroke="#3445c0" strokeWidth="1.500" /><path d="M8 7h8M8 12h9M8 17h6M8 22h9M8 27h7M8 32h8" stroke="#aaa" /><path d="M24 6h8M24 10h8M24 14h8M24 18h8M24 22h8M24 26h8M24 30h8" stroke="#c8cddb" strokeWidth="1.500" /><path d="M0 37h48v11H0z" fill="#3a4260" /><path d="M0 37h48v3H0z" fill="#5a6280" /></svg> },
  { name: "System monitor", icon: <svg width="46" height="46" viewBox="0 0 46 46"><path d="M1 11l8-4 6 24-10 3z" fill="#bdbdbd" /><path d="M13 5l33 5-4 24-30-4z" fill="#d9d9d9" /><path d="M16 9l26 4-3 17-24-3z" fill="#f1f8fc" /><path d="m16 20 4 1 2-6 3 12 3-10 3 8 2-5 6 1" fill="none" stroke="#3786b8" strokeWidth="1.500" /><path d="M26 32h6l3 6h-12z" fill="#a9a9a9" /><ellipse cx="31" cy="39" rx="13" ry="5" fill="#e2e2e2" /></svg> },
  { name: "File Explorer", state: "open", icon: <svg width="43" height="40" viewBox="0 0 43 40"><path d="M0 3q0-2 2-2h16l4 5v6H0z" fill="#e09b0c" /><path d="M0 10l20-1 3-4h20v29q0 2-2 2H2q-2 0-2-2z" fill="#ffcf4e" /><path d="M8 39V25q0-4 4-4h20q4 0 4 4v14h-7v-9H15v9z" fill="#3b97dc" /></svg> },
  { name: "Calculator", icon: <svg width="34" height="46" viewBox="0 0 34 46"><rect width="34" height="46" rx="3" fill="#5b9bd0" /><rect x="2" y="2" width="30" height="42" rx="2" fill="#d9ebf8" /><path d="M4 5h26v3H4z" fill="#f0a53c" /><path d="M4 9h26v10H4z" fill="#a8cfec" /><circle cx="25" cy="14" r="2.500" fill="none" stroke="#345" strokeWidth="1.500" /><g fill="#4d8fc8">{[22, 27, 32, 37].map((y) => [4, 9, 14, 19, 24].map((x) => <rect key={`${x}-${y}`} x={x} y={y} width="4" height="3.500" />))}</g><path d="M24 32h5v9h-5z" fill="#f08c1c" /></svg> },
  { name: "Store", icon: <svg width="46" height="48" viewBox="0 0 46 48"><path d="M0 9q0-2 2-2h42q2 0 2 2v31q0 8-8 8H8q-8 0-8-8z" fill="#fafafa" /><path d="M11 11V2h24v9" fill="none" stroke="#1eaee8" strokeWidth="3.500" /><path d="M13 17h9v9h-9z" fill="#f25022" /><path d="M24 17h9v9h-9z" fill="#7fba00" /><path d="M13 28h9v9h-9z" fill="#00a4ef" /><path d="M24 28h9v9h-9z" fill="#ffb900" /></svg> },
  { name: "Control Panel", icon: <svg width="43" height="32" viewBox="0 0 43 32"><rect width="43" height="32" rx="2" fill="#2d93d0" /><rect x="1.500" y="1.500" width="40" height="29" fill="#5cbaf0" /><circle cx="13" cy="13" r="8" fill="#c8e8fb" /><path d="M13 13V5a8 8 0 0 1 8 8z" fill="#ffc83c" /><path d="M13 21a8 8 0 0 0 8-8h-8z" fill="#1273b8" /><path d="M29 4h9v4h-9zM29 11h9v4h-9zM29 18h9v4h-9z" fill="#c8e8fb" stroke="#1273b8" /><path d="M5 26h32" stroke="#fff" strokeWidth="1.500" /><path d="M19 24h3v4h-3z" fill="#ffb020" /></svg> },
  { name: "Gauge", icon: <svg width="46" height="46" viewBox="0 0 46 46"><circle cx="23" cy="23" r="22" fill="#b8b5b0" stroke="#e9e6e2" strokeWidth="2" /><circle cx="23" cy="23" r="17" fill="#f4f1ec" stroke="#8d8780" /><path d="M12 30a13 13 0 0 1 3-18" fill="none" stroke="#777" strokeWidth="3" strokeDasharray="2 1.500" /><path d="M16 11a13 13 0 0 1 14 0" fill="none" stroke="#999" strokeWidth="3" strokeDasharray="2 1.500" /><path d="M31 12a13 13 0 0 1 3 18" fill="none" stroke="#e06a2c" strokeWidth="3" /><path d="m16 8 9 20-4-2z" fill="#c01a1a" /></svg> },
  { name: "Steam", state: "open", icon: <svg width="46" height="46" viewBox="0 0 46 46"><defs><linearGradient id="sky" x1="0" y1="0" x2="0" y2="1"><stop offset="0" stopColor="#111a38" /><stop offset=".6" stopColor="#0d4a80" /><stop offset="1" stopColor="#1b8cc4" /></linearGradient></defs><circle cx="23" cy="23" r="22" fill="url(#sky)" /><path d="M1 24l14 6 9-8 8-1-10 11-6 5-14-5z" fill="#fff" /><circle cx="31" cy="17" r="8.500" fill="#fff" /><circle cx="31" cy="17" r="5.500" fill="#12345c" /><circle cx="31" cy="17" r="4" fill="#fff" /><circle cx="16" cy="32" r="6" fill="#fff" /><circle cx="16" cy="32" r="3.500" fill="none" stroke="#12508a" strokeWidth="1.500" /></svg> },
  { name: "Unreal Editor", state: "active", icon: <span className="flex size-12 items-center justify-center rounded-full border-2 border-white bg-black"><SiUnrealengine size={44} /></span> },
  { name: "Paint", icon: <svg width="48" height="46" viewBox="0 0 48 46"><path d="M2 34C-3 20 8 4 26 6c14 2 20 14 14 24-5 10-16 14-24 12-6-2-2-8-6-10-3-1-6 3-8 2z" fill="#cfe6f4" stroke="#8ab6d4" /><ellipse cx="15" cy="17" rx="4" ry="3.500" fill="#3fae49" /><ellipse cx="25" cy="13" rx="4.500" ry="4" fill="#f5b324" /><ellipse cx="8" cy="25" rx="4" ry="3.500" fill="#e8483c" /><circle cx="20" cy="28" r="3" fill="#1f3a52" /><path d="M37 11l4 2-14 32-3 1z" fill="#e8861c" /><path d="M35 1l7-1 5 6-6 8-5-3z" fill="#c9a06a" /></svg> },
  { name: "Brave", state: "open", icon: <span className="flex bg-[radial-gradient(ellipse_38%_40%_at_50%_50%,#fff_95%,transparent)] text-[#fb3c1a]"><SiBrave size={48} /></span> },
];

function TaskBar() {
  return (
    <div className="flex h-[60px] items-stretch bg-[#20261f] bg-linear-to-r from-[#20281f] via-[#26241d] via-30% to-[#1f261e] font-['Open_Sans',sans-serif] text-white">
      <button aria-label="Start" className="flex w-[73px] items-center justify-center"><svg width="40" height="40" viewBox="0 0 40 40" fill="#fff"><path d="M0 6l16-3v16H0zM17 2.800 40 0v19H17zM0 20h16v16L0 34zM17 20h23v20l-23-3.500z" /></svg></button>
      <button aria-label="Task view" className="mr-1 flex w-[71px] items-center justify-center"><svg width="30" height="28" viewBox="0 0 30 28" fill="none" stroke="#fff" strokeWidth="1.500"><path d="M1 0v5h19V0M1 8h19v12H1zM1 28v-5h19v5M27 0v28" /><path d="M25 9h4v4h-4z" fill="#fff" stroke="none" /></svg></button>
      {apps.map((a) => (
        <button key={a.name} aria-label={a.name} className={a.state === "active" ? "relative ml-px flex w-[92px] items-center justify-center border-r-4 border-[#3a403a] bg-[#515751]" : "relative flex w-[93px] items-center justify-center"}>
          {a.icon}
          {a.state && <i className={a.state === "active" ? "absolute inset-x-0 bottom-0 h-[3px] bg-[#aaa6ec]" : "absolute inset-x-[7px] bottom-0 h-[3px] bg-[#aaa6ec]"} />}
        </button>
      ))}
      <div className="ml-auto flex items-center text-[17px] leading-none">
        <svg width="19" height="10" viewBox="0 0 19 10" fill="none" stroke="#fff" strokeWidth="1.500"><path d="m1 9 8.500-8L18 9" /></svg>
        <svg width="24" height="18" viewBox="0 0 24 18" fill="none" stroke="#fff" strokeWidth="1.300" className="ml-3.5"><path d="M7 1h16v12H4M4 9v8M1 1h5v4H1zM3.500 5v4M9 17h8M13 13v4" /></svg>
        <svg width="22" height="18" viewBox="0 0 22 18" fill="none" stroke="#fff" strokeWidth="1.300" className="ml-3.5"><path d="M1 6h3l5-5v16l-5-5H1zM12 6q2 3 0 6M15 3.500q4 5.500 0 11M18 1q6 8 0 16" /></svg>
        <span className="ml-[18px]">ESP</span>
        <time className="ml-[23px] flex w-[94px] flex-col items-center gap-2.5"><span>21:52</span><span>15/08/2025</span></time>
        <svg width="25" height="25" viewBox="0 0 25 25" fill="none" stroke="#fff" strokeWidth="1.400" className="mr-[31px] ml-[27px]"><path d="M1 1h23v18h-8l-4 4-1-4H1z" /></svg>
        <i className="mr-1.5 h-[60px] w-px bg-[#777]" />
      </div>
    </div>
  );
}

export default function App() {
  return (
    <div className="flex min-h-screen flex-col bg-[#151515] font-['Roboto',sans-serif]">
      <TitleBar />
      <Toolbar />
      <TabStrip />
      <Graph />
      <StatusBar />
      <TaskBar />
    </div>
  );
}
